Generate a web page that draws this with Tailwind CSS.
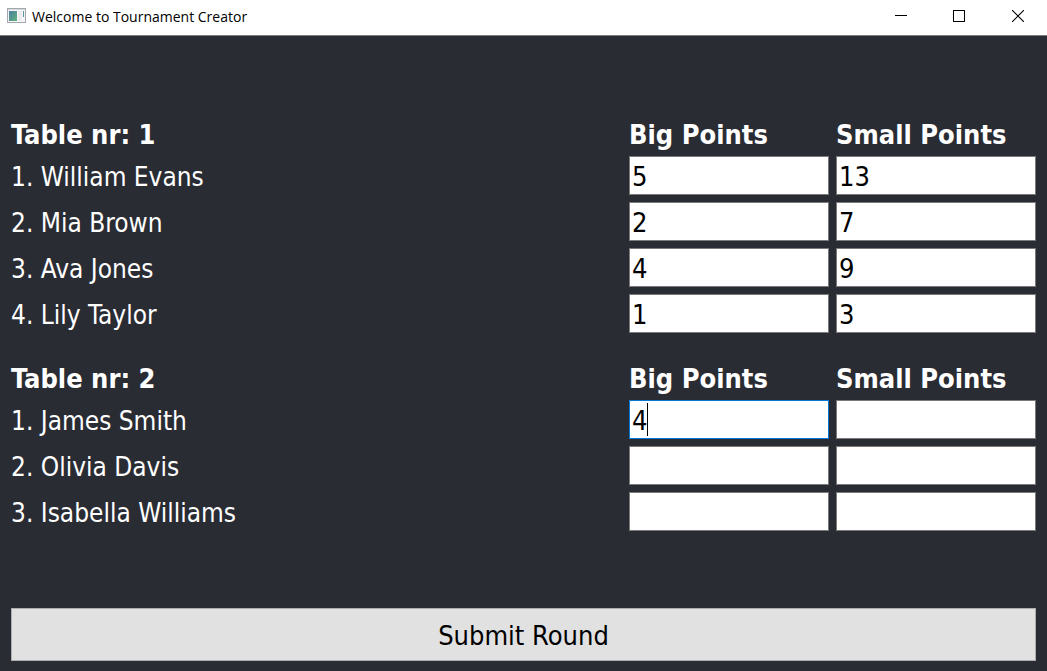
<!DOCTYPE html>
<html lang="en">
<head>
<meta charset="utf-8">
<meta name="viewport" content="width=device-width, initial-scale=1">
<title>Welcome to Tournament Creator</title>
<script src="https://cdn.jsdelivr.net/npm/@tailwindcss/browser@4"></script>
</head>
<body class="flex min-h-screen flex-col bg-[#2a2c34] font-['DejaVu_Sans_Condensed','DejaVu_Sans',sans-serif] text-[26px] leading-[33px] text-white">
  <header class="flex h-9 items-stretch justify-between border-b border-[#7b7c80] bg-white text-black">
    <div class="flex items-center gap-1.5 pb-0.5 pl-[7px]">
      <svg class="mb-0.5 h-4 w-[19px]" viewBox="0 0 19 16" aria-hidden="true">
        <defs><linearGradient id="pane" x1="0" y1="0" x2="1" y2="1"><stop offset="0" stop-color="#4a80a0"/><stop offset="1" stop-color="#62b27c"/></linearGradient></defs>
        <rect x=".5" y=".5" width="18" height="14" fill="#f6f6f8" stroke="#a3a7ae"/>
        <rect x="1" y="1" width="17" height="1" fill="#d5d8de"/>
        <rect x="2" y="3" width="8" height="10" fill="url(#pane)"/>
        <rect x="11" y="3" width="4" height="10" fill="#ececee"/>
        <rect x="16" y="3" width="1" height="6" fill="#5c93a0"/>
      </svg>
      <h1 class="font-['Open_Sans','Noto_Sans',sans-serif] text-sm leading-5">Welcome to Tournament Creator</h1>
    </div>
    <div class="flex">
      <button type="button" aria-label="Minimize" class="flex w-[58px] items-center justify-center pb-1"><svg class="size-3" viewBox="0 0 12 12" shape-rendering="crispEdges"><path d="M0 5.5h12" stroke="#000"/></svg></button>
      <button type="button" aria-label="Maximize" class="flex w-[58px] items-center justify-center pb-1"><svg class="size-3" viewBox="0 0 12 12" shape-rendering="crispEdges"><path d="M.5.5h11v11H.5z" fill="none" stroke="#000"/></svg></button>
      <button type="button" aria-label="Close" class="flex w-[59px] items-center justify-center pb-1"><svg class="size-3" viewBox="0 0 12 12"><path d="M0 0l12 12M12 0L0 12" fill="none" stroke="#000" stroke-width="1.1"/></svg></button>
    </div>
  </header>
  <form class="flex flex-1 flex-col px-[11px] pb-2.5">
    <main class="flex flex-1 flex-col justify-center gap-5 pt-2.5">
      <table class="w-full border-collapse text-left">
        <thead class="text-[27px]"><tr>
          <th class="pt-0.5 pb-[5px] font-bold">Table nr: 1</th>
          <th class="w-[200px] pt-0.5 pb-[5px] font-bold">Big Points</th>
          <th class="w-[207px] pt-0.5 pb-[5px] pl-[7px] font-bold">Small Points</th>
        </tr></thead>
        <tbody>
          <tr><td class="pb-1">1. William Evans</td><td class="pb-[7px]"><input aria-label="William Evans big points" value="5" class="block h-[39px] w-full border border-[#7a7a7a] bg-white px-0.5 pt-0.5 text-[27px] text-black outline-none"></td><td class="pb-[7px] pl-[7px]"><input aria-label="William Evans small points" value="13" class="block h-[39px] w-full border border-[#7a7a7a] bg-white px-0.5 pt-0.5 text-[27px] text-black outline-none"></td></tr>
          <tr><td class="pb-1">2. Mia Brown</td><td class="pb-[7px]"><input aria-label="Mia Brown big points" value="2" class="block h-[39px] w-full border border-[#7a7a7a] bg-white px-0.5 pt-0.5 text-[27px] text-black outline-none"></td><td class="pb-[7px] pl-[7px]"><input aria-label="Mia Brown small points" value="7" class="block h-[39px] w-full border border-[#7a7a7a] bg-white px-0.5 pt-0.5 text-[27px] text-black outline-none"></td></tr>
          <tr><td class="pb-1">3. Ava Jones</td><td class="pb-[7px]"><input aria-label="Ava Jones big points" value="4" class="block h-[39px] w-full border border-[#7a7a7a] bg-white px-0.5 pt-0.5 text-[27px] text-black outline-none"></td><td class="pb-[7px] pl-[7px]"><input aria-label="Ava Jones small points" value="9" class="block h-[39px] w-full border border-[#7a7a7a] bg-white px-0.5 pt-0.5 text-[27px] text-black outline-none"></td></tr>
          <tr><td class="pb-1">4. Lily Taylor</td><td class="pb-[7px]"><input aria-label="Lily Taylor big points" value="1" class="block h-[39px] w-full border border-[#7a7a7a] bg-white px-0.5 pt-0.5 text-[27px] text-black outline-none"></td><td class="pb-[7px] pl-[7px]"><input aria-label="Lily Taylor small points" value="3" class="block h-[39px] w-full border border-[#7a7a7a] bg-white px-0.5 pt-0.5 text-[27px] text-black outline-none"></td></tr>
        </tbody>
      </table>
      <table class="w-full border-collapse text-left">
        <thead class="text-[27px]"><tr>
          <th class="pt-0.5 pb-[5px] font-bold">Table nr: 2</th>
          <th class="w-[200px] pt-0.5 pb-[5px] font-bold">Big Points</th>
          <th class="w-[207px] pt-0.5 pb-[5px] pl-[7px] font-bold">Small Points</th>
        </tr></thead>
        <tbody>
          <tr><td class="pb-1">1. James Smith</td><td class="pb-[7px]"><div class="relative"><input aria-label="James Smith big points" value="4" class="block h-[39px] w-full border border-[#0078d7] bg-white px-0.5 pt-0.5 text-[27px] text-black outline-none"><span class="absolute top-[3px] left-[18px] h-[33px] w-px bg-black"></span></div></td><td class="pb-[7px] pl-[7px]"><input aria-label="James Smith small points" class="block h-[39px] w-full border border-[#7a7a7a] bg-white px-0.5 pt-0.5 text-[27px] text-black outline-none"></td></tr>
          <tr><td class="pb-1">2. Olivia Davis</td><td class="pb-[7px]"><input aria-label="Olivia Davis big points" class="block h-[39px] w-full border border-[#7a7a7a] bg-white px-0.5 pt-0.5 text-[27px] text-black outline-none"></td><td class="pb-[7px] pl-[7px]"><input aria-label="Olivia Davis small points" class="block h-[39px] w-full border border-[#7a7a7a] bg-white px-0.5 pt-0.5 text-[27px] text-black outline-none"></td></tr>
          <tr><td class="pb-1">3. Isabella Williams</td><td class="pb-[7px]"><input aria-label="Isabella Williams big points" class="block h-[39px] w-full border border-[#7a7a7a] bg-white px-0.5 pt-0.5 text-[27px] text-black outline-none"></td><td class="pb-[7px] pl-[7px]"><input aria-label="Isabella Williams small points" class="block h-[39px] w-full border border-[#7a7a7a] bg-white px-0.5 pt-0.5 text-[27px] text-black outline-none"></td></tr>
        </tbody>
      </table>
    </main>
    <button type="button" class="h-[53px] w-full border border-[#adadad] bg-[#e1e1e1] pt-0.5 text-[27px] text-black">Submit Round</button>
  </form>
</body>
</html>
